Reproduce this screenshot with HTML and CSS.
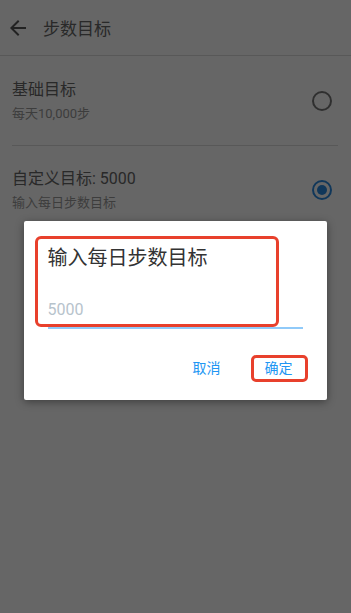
FILE: index.html
```html
<!DOCTYPE html>
<html lang="zh">
<head>
<meta charset="utf-8">
<link rel="stylesheet" href="styles.css">
</head>
<body>
<div class="screen">
  <header class="topbar">
    <svg class="back" viewBox="0 0 24 24" width="24" height="24"><path d="M20 11H7.83l5.59-5.59L12 4l-8 8 8 8 1.41-1.41L7.83 13H20v-2z"/></svg>
    <span class="topbar-title">步数目标</span>
  </header>
  <div class="list">
    <div class="item">
      <div class="item-text">
        <div class="item-title">基础目标</div>
        <div class="item-sub">每天10,000步</div>
      </div>
      <span class="radio"></span>
    </div>
    <div class="divider"></div>
    <div class="item">
      <div class="item-text">
        <div class="item-title">自定义目标: 5000</div>
        <div class="item-sub">输入每日步数目标</div>
      </div>
      <span class="radio checked"></span>
    </div>
  </div>
  <div class="overlay">
    <div class="dialog">
      <div class="dialog-title">输入每日步数目标</div>
      <div class="dialog-input">5000</div>
      <div class="dialog-actions">
        <span class="btn">取消</span>
        <span class="btn">确定</span>
      </div>
      <span class="mark mark-main"></span>
      <span class="mark mark-ok"></span>
    </div>
  </div>
</div>
</body>
</html>
```
FILE: styles.css
```css
* { box-sizing: border-box; }
html, body { margin: 0; padding: 0; }
body {
  font-family: Roboto, "Noto Sans CJK SC", sans-serif;
  background: #fff;
}
.screen {
  position: relative;
  width: 351px;
  height: 613px;
  overflow: hidden;
  background: #fff;
}
.topbar {
  height: 56px;
  display: flex;
  align-items: center;
  border-bottom: 1px solid #dcdcdc;
  padding-left: 6px;
}
.back { fill: #555; flex: none; }
.topbar-title {
  margin-left: 13px;
  font-size: 17px;
  color: #666;
}
.list { display: flex; flex-direction: column; }
.item {
  display: flex;
  align-items: center;
  padding: 23px 19px 22px 12px;
}
.item + .divider + .item { padding-top: 22px; }
.item-text { flex: 1; }
.item-title {
  font-size: 16px;
  line-height: 22px;
  color: #666;
}
.item-sub {
  margin-top: 4px;
  font-size: 13px;
  line-height: 18px;
  color: #999;
}
.divider {
  height: 1px;
  margin: 0 13px 0 12px;
  background: #ddd;
}
.radio {
  width: 20px;
  height: 20px;
  border-radius: 50%;
  border: 2px solid #777;
  flex: none;
  display: flex;
  align-items: center;
  justify-content: center;
}
.radio.checked { border-color: #2a8ae0; }
.radio.checked::after {
  content: "";
  width: 10px;
  height: 10px;
  border-radius: 50%;
  background: #2a8ae0;
}
.overlay {
  position: absolute;
  inset: 0;
  background: rgba(0, 0, 0, 0.6);
  display: flex;
  flex-direction: column;
  align-items: center;
  padding-top: 221px;
}
.dialog {
  position: relative;
  width: 303px;
  margin-left: -1px;
  background: #fff;
  border-radius: 2px;
  box-shadow: 0 2px 8px rgba(0, 0, 0, 0.4);
  padding: 24px 0 14px;
}
.dialog-title {
  padding: 0 24px;
  font-size: 20px;
  line-height: 26px;
  color: #333;
}
.dialog-input {
  margin: 29px 24px 0;
  padding-bottom: 7px;
  font-size: 16px;
  line-height: 20px;
  color: #b7c3cc;
  border-bottom: 2px solid #90caf9;
}
.dialog-actions {
  display: flex;
  justify-content: flex-end;
  gap: 12px;
  margin-top: 21px;
  padding-right: 18px;
}
.btn {
  padding: 0 16px;
  height: 36px;
  line-height: 36px;
  font-size: 14px;
  color: #2196f3;
}
.mark {
  position: absolute;
  border: 3px solid #e8402c;
  border-radius: 6px;
}
.mark-main { left: 11px; top: 15px; width: 244px; height: 91px; }
.mark-ok { left: 227px; top: 134px; width: 57px; height: 27px; border-radius: 5px; }
```
